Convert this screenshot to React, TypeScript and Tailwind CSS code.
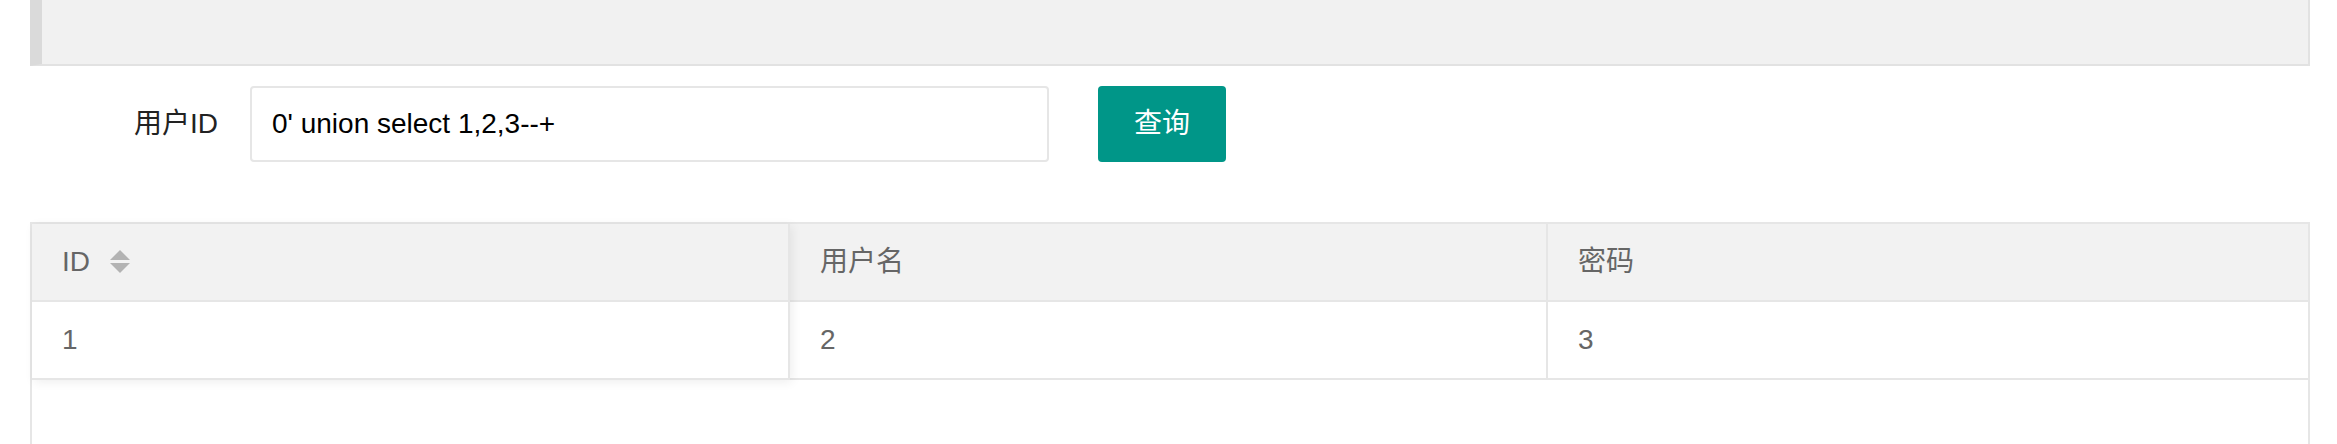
import React from "react";

function SortIcon() {
  return (
    <svg width="20" height="24" viewBox="0 0 20 24" className="ml-[20px] shrink-0">
      <polygon points="10,0 20,10 0,10" fill="#b3b3b3" />
      <polygon points="0,13 20,13 10,23" fill="#b3b3b3" />
    </svg>
  );
}

export default function App() {
  return (
    <div className="w-[2337px] h-[444px] overflow-hidden bg-white font-['Liberation_Sans','Noto_Sans_CJK_SC',sans-serif]">
      {/* quote panel */}
      <div className="ml-[30px] w-[2280px] h-[66px] bg-[#f1f1f1] border-l-[12px] border-l-[#dadada] border-r-2 border-b-2 border-r-[#e2e2e2] border-b-[#e2e2e2]" />

      {/* form row */}
      <div className="mt-[20px] ml-[30px] flex items-center">
        <label className="w-[218px] pr-[30px] text-right text-[28px] text-[#222] leading-[76px]">用户ID</label>
        <div className="ml-[2px] w-[799px] h-[76px] border-2 border-[#e6e6e6] rounded-[4px] flex items-center pl-[20px] text-[28px] text-black">
          0&#39; union select 1,2,3--+
        </div>
        <button className="ml-[49px] w-[128px] h-[76px] bg-[#009688] rounded-[4px] text-white text-[28px] flex items-center justify-center">
          查询
        </button>
      </div>

      {/* table */}
      <div className="mt-[60px] ml-[30px] w-[2280px] h-[240px] border-2 border-b-0 border-[#e6e6e6] text-[28px] text-[#666]">
        <div className="flex">
          <div className="w-[758px] relative z-10 bg-white shadow-[2px_2px_10px_rgba(0,0,0,0.07)]">
            <div className="h-[78px] bg-[#f2f2f2] border-r-2 border-b-2 border-[#e6e6e6] flex items-center px-[30px]">
              <span>ID</span>
              <SortIcon />
            </div>
            <div className="h-[78px] border-r-2 border-b-2 border-[#e6e6e6] flex items-center px-[30px]">
              1
            </div>
          </div>
          <div className="w-[758px]">
            <div className="h-[78px] bg-[#f2f2f2] border-r-2 border-b-2 border-[#e6e6e6] flex items-center px-[30px]">
              用户名
            </div>
            <div className="h-[78px] border-r-2 border-b-2 border-[#e6e6e6] flex items-center px-[30px]">
              2
            </div>
          </div>
          <div className="flex-1">
            <div className="h-[78px] bg-[#f2f2f2] border-b-2 border-[#e6e6e6] flex items-center px-[30px]">
              密码
            </div>
            <div className="h-[78px] border-b-2 border-[#e6e6e6] flex items-center px-[30px]">
              3
            </div>
          </div>
        </div>
      </div>
    </div>
  );
}
